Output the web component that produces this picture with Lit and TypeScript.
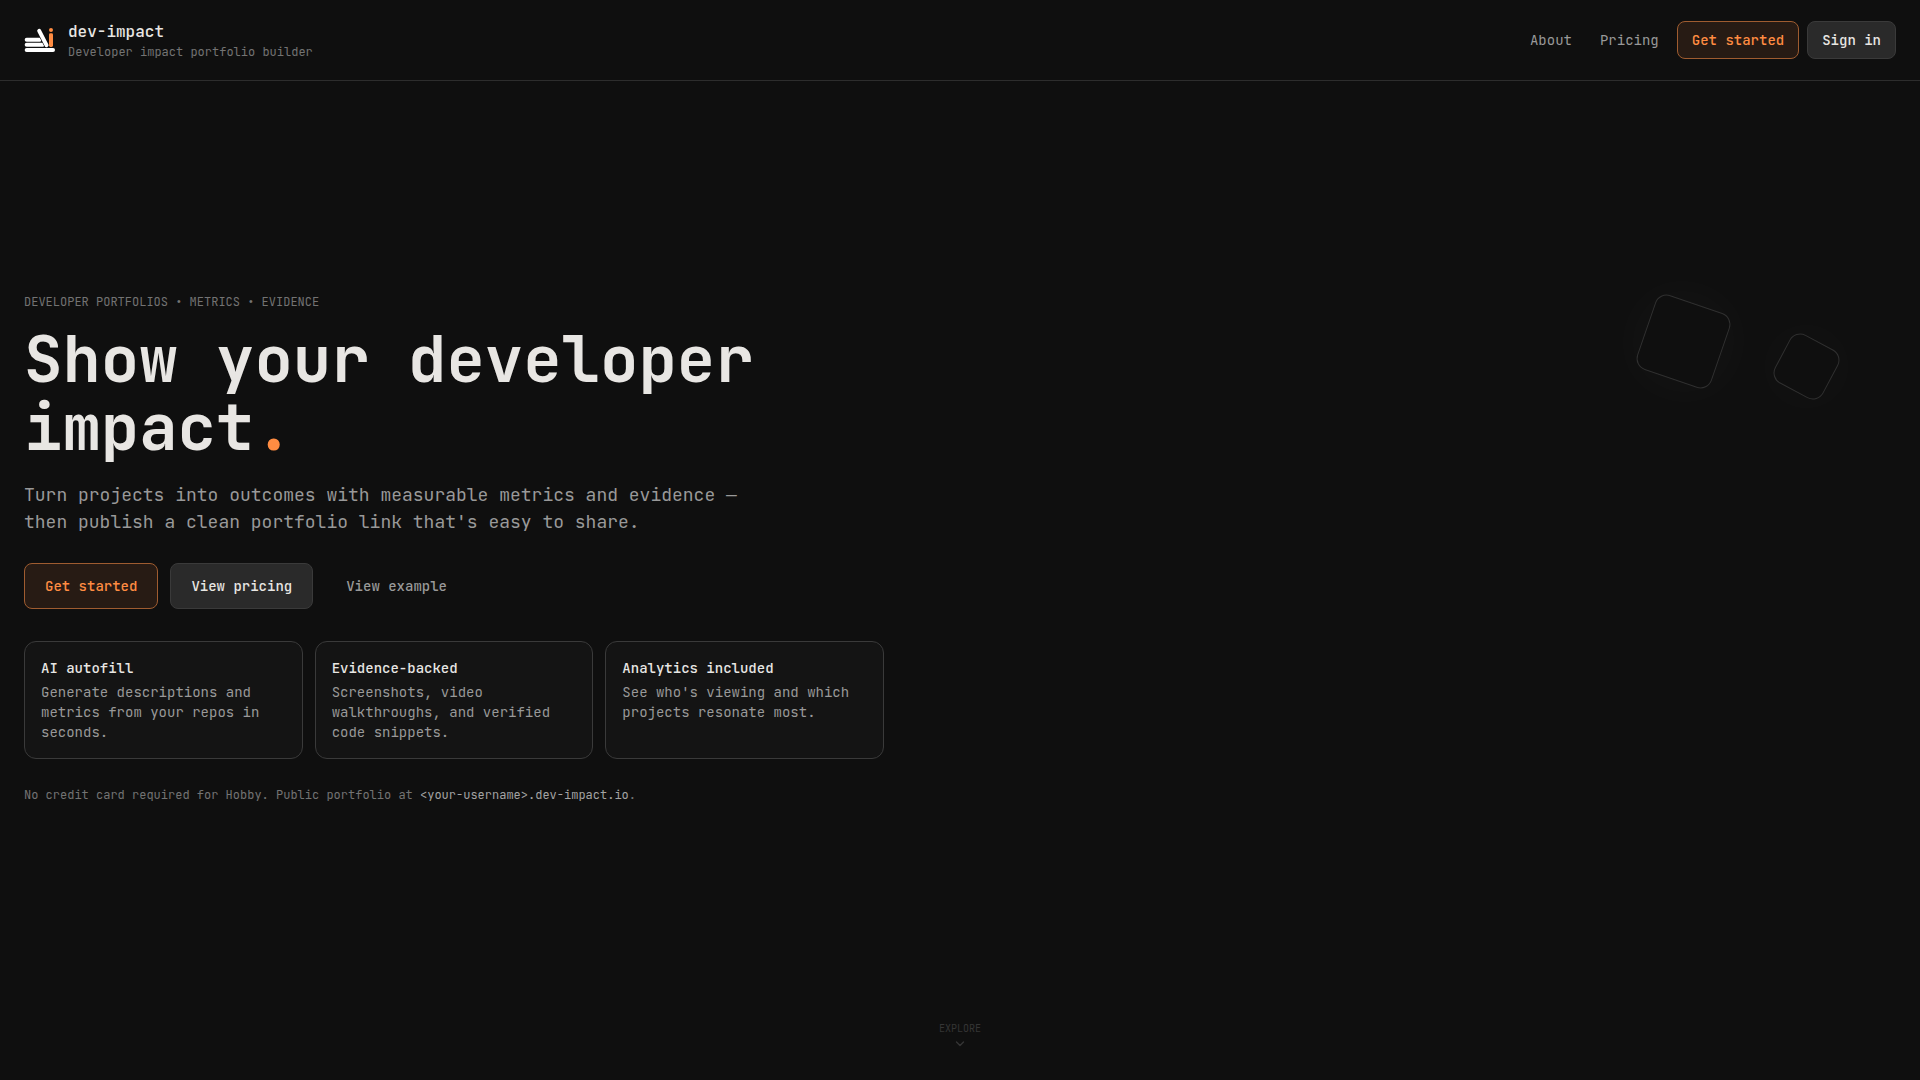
import { LitElement, html, css } from "lit";
import { customElement } from "lit/decorators.js";

interface Feature {
  title: string;
  text: string;
}

const FEATURES: Feature[] = [
  { title: "AI autofill", text: "Generate descriptions and metrics from your repos in seconds." },
  { title: "Evidence-backed", text: "Screenshots, video walkthroughs, and verified code snippets." },
  { title: "Analytics included", text: "See who's viewing and which projects resonate most." },
];

@customElement("app-root")
export class AppRoot extends LitElement {
  static styles = css`
    :host {
      --bg: #0f0f0f;
      --surface: #141414;
      --raised: #2a2a2a;
      --line: #2d2d2d;
      --line-strong: #3a3a3a;
      --text: #e8e6e3;
      --muted: #999999;
      --faint: #737373;
      --accent: #ff8c42;
      display: flex;
      flex-direction: column;
      min-height: 100vh;
      background: var(--bg);
      color: var(--text);
      font-family: "JetBrains Mono", "DejaVu Sans Mono", "Liberation Mono", monospace;
      font-size: 14px;
      line-height: 20px;
    }
    *,
    *::before,
    *::after {
      box-sizing: border-box;
    }
    h1,
    h2,
    p {
      margin: 0;
    }
    a {
      color: inherit;
      text-decoration: none;
    }
    .header {
      display: flex;
      align-items: center;
      justify-content: space-between;
      padding: 20px 24px;
      border-bottom: 1px solid var(--line);
    }
    .brand {
      display: flex;
      align-items: center;
      gap: 12px;
    }
    .logo {
      display: block;
      width: 32px;
      height: 32px;
    }
    .brand-text {
      display: flex;
      flex-direction: column;
    }
    .brand-name {
      font-size: 16px;
      line-height: 24px;
      font-weight: 500;
    }
    .brand-tag {
      font-size: 12px;
      line-height: 16px;
      color: var(--faint);
    }
    .nav {
      display: flex;
      align-items: center;
      gap: 8px;
    }
    .nav-link {
      padding: 8px 10px;
      color: var(--muted);
    }
    .button {
      margin: 0;
      padding: 8px 14px;
      border: 1px solid transparent;
      border-radius: 8px;
      background: transparent;
      color: var(--muted);
      font: inherit;
      font-weight: 500;
      cursor: pointer;
    }
    .button.large {
      padding: 12px 20px;
    }
    .button.primary {
      background: #271b14;
      border-color: #9f5c30;
      color: var(--accent);
    }
    .button.secondary {
      background: var(--raised);
      border-color: var(--line-strong);
      color: var(--text);
    }
    .main {
      position: relative;
      flex: 1;
      display: flex;
      flex-direction: column;
      overflow: hidden;
    }
    .hero {
      flex: 1;
      display: flex;
      flex-direction: column;
      justify-content: center;
      align-items: flex-start;
      max-width: 908px;
      padding: 0 24px;
    }
    .eyebrow {
      font-size: 12px;
      line-height: 16px;
      color: var(--faint);
      text-transform: uppercase;
    }
    .title {
      margin-top: 15px;
      max-width: 768px;
      font-size: 64px;
      line-height: 68px;
      font-weight: 600;
    }
    .stop {
      color: var(--accent);
    }
    .lead {
      margin-top: 20px;
      max-width: 728px;
      font-size: 18px;
      line-height: 27px;
      color: var(--muted);
    }
    .actions {
      display: flex;
      flex-wrap: wrap;
      gap: 12px;
      margin-top: 28px;
    }
    .features {
      display: grid;
      grid-template-columns: repeat(3, 1fr);
      gap: 12px;
      align-self: stretch;
      margin-top: 32px;
    }
    .card {
      display: flex;
      flex-direction: column;
      gap: 4px;
      padding: 16px;
      border: 1px solid var(--line-strong);
      border-radius: 12px;
      background: var(--surface);
    }
    .card-title {
      font-size: 14px;
      line-height: 20px;
      font-weight: 500;
    }
    .card-text {
      color: var(--muted);
    }
    .note {
      margin-top: 28px;
      font-size: 12px;
      line-height: 16px;
      color: var(--faint);
    }
    .host {
      color: #a3a3a3;
    }
    .explore {
      display: flex;
      flex-direction: column;
      align-items: center;
      align-self: center;
      height: 65px;
      padding-top: 6px;
      font-size: 10px;
      line-height: 16px;
      color: #353535;
    }
    .chevron {
      display: block;
      width: 14px;
      height: 14px;
    }
    .shape {
      position: absolute;
      border: 1px solid #303030;
      border-radius: 12px;
      box-shadow: 0 0 60px rgba(255, 255, 255, 0.04);
      pointer-events: none;
    }
    .shape.big {
      top: 221px;
      right: 197px;
      width: 79px;
      height: 79px;
      transform: rotate(19deg);
    }
    .shape.small {
      top: 258px;
      right: 86px;
      width: 55px;
      height: 55px;
      transform: rotate(28deg);
    }
  `;

  render() {
    return html`
      <header class="header">
        <a class="brand" href="#">
          <svg class="logo" viewBox="0 0 32 32" aria-hidden="true">
            <g fill="#ffffff">
              <rect x="0.7" y="13.8" width="17" height="3.9" rx="1.9" />
              <rect x="0.7" y="18.8" width="20" height="3.9" rx="1.9" />
              <rect x="0.7" y="24" width="30.3" height="4" rx="1.9" />
            </g>
            <path d="M15.2 6.8 L22.5 21.1" stroke="#0f0f0f" stroke-width="5.2" stroke-linecap="round" />
            <path d="M15.2 6.8 L22.5 21.1" stroke="#ffffff" stroke-width="4" stroke-linecap="round" />
            <circle cx="27" cy="6" r="2" fill="#ff8c42" />
            <rect x="25" y="9.2" width="4" height="13.8" rx="1.4" fill="#ff8c42" />
          </svg>
          <span class="brand-text">
            <span class="brand-name">dev-impact</span>
            <span class="brand-tag">Developer impact portfolio builder</span>
          </span>
        </a>
        <nav class="nav" aria-label="Main">
          <a class="nav-link" href="#about">About</a>
          <a class="nav-link" href="#pricing">Pricing</a>
          <button class="button primary" type="button">Get started</button>
          <button class="button secondary" type="button">Sign in</button>
        </nav>
      </header>
      <main class="main">
        <div class="shape big"></div>
        <div class="shape small"></div>
        <section class="hero">
          <p class="eyebrow">Developer portfolios • Metrics • Evidence</p>
          <h1 class="title">Show your developer impact<span class="stop">.</span></h1>
          <p class="lead">
            Turn projects into outcomes with measurable metrics and evidence — then publish a clean
            portfolio link that's easy to share.
          </p>
          <div class="actions">
            <button class="button large primary" type="button">Get started</button>
            <button class="button large secondary" type="button">View pricing</button>
            <button class="button large" type="button">View example</button>
          </div>
          <div class="features">
            ${FEATURES.map(
              (f) => html`
                <article class="card">
                  <h2 class="card-title">${f.title}</h2>
                  <p class="card-text">${f.text}</p>
                </article>
              `
            )}
          </div>
          <p class="note">
            No credit card required for Hobby. Public portfolio at
            <span class="host">&lt;your-username&gt;.dev-impact.io</span>.
          </p>
        </section>
        <a class="explore" href="#explore">
          EXPLORE
          <svg class="chevron" viewBox="0 0 14 14" fill="none" aria-hidden="true">
            <path d="M3.5 5 L7 8.5 L10.5 5" stroke="currentColor" stroke-width="1.4" stroke-linecap="round" stroke-linejoin="round" />
          </svg>
        </a>
      </main>
    `;
  }
}
